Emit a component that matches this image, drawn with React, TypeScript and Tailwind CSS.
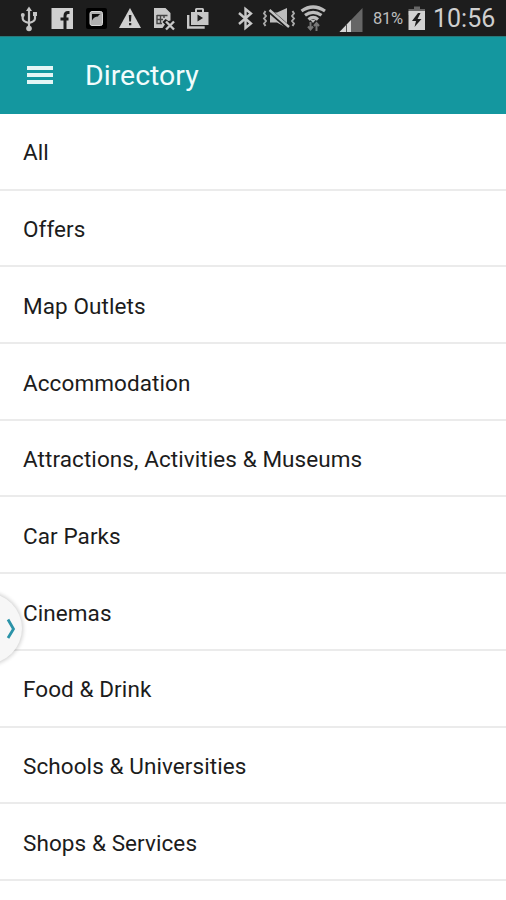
import { useState } from 'react';

const categories = [
  'All',
  'Offers',
  'Map Outlets',
  'Accommodation',
  'Attractions, Activities & Museums',
  'Car Parks',
  'Cinemas',
  'Food & Drink',
  'Schools & Universities',
  'Shops & Services',
];

function NotificationIcons() {
  return (
    <div className="flex h-full items-center">
      {/* USB */}
      <svg className="ml-[20px] h-9 w-[18px]" viewBox="20 0 18 36" fill="none" stroke="#c4c4c4" strokeWidth="2.2">
        <path d="M29 10v18M22.700 15v3.500q0 3 6.300 4.500M35 14v4.500q0 3-6 4.500" />
        <path d="M29 6.500l3 4.500h-6z" fill="#c4c4c4" stroke="none" />
        <circle cx="22.800" cy="15" r="2" fill="#c4c4c4" stroke="none" />
        <path d="M33 12h4v4h-4z" fill="#c4c4c4" stroke="none" />
        <circle cx="29" cy="28.500" r="2.800" fill="#c4c4c4" stroke="none" />
      </svg>
      {/* Facebook */}
      <svg className="ml-[13px] h-9 w-[24px]" viewBox="51 0 24 36">
        <path d="M51.500 8h21.500v21H51.500z" fill="#d0d0d0" />
        <path d="M69.500 12.500h-1.500q-3 0-3 3.500v13M60.500 19h8" fill="none" stroke="#1d1d1d" strokeWidth="3" />
      </svg>
      {/* Flipboard-like tile */}
      <svg className="ml-[11px] h-9 w-[22px]" viewBox="86 0 22 36">
        <rect x="86" y="8" width="21" height="21" rx="2" fill="#000" />
        <rect x="90" y="11.500" width="12.500" height="14" rx="2" fill="#b0b0b0" stroke="#d6d6d6" strokeWidth="1" />
        <path d="M92 20.500V14h8.500q-2 .5-2.500 2.500-4 0-6 4z" fill="#0c0c0c" />
      </svg>
      {/* Warning */}
      <svg className="ml-[10px] h-9 w-[24px]" viewBox="118 0 24 36">
        <path d="M130 8L141 28H119z" fill="#d0d0d0" />
        <path d="M128.800 15h2.600l-.4 6.500h-1.800zM129 23h2.300v2.300H129z" fill="#222" />
      </svg>
      {/* SIM error */}
      <svg className="ml-[11px] h-9 w-[24px]" viewBox="153 0 24 36">
        <path d="M154 8h11.500l5 5v7.500l-2 .5-3-2-3 3 2.500 2.500L162.500 28H154z" fill="#c8c8c8" />
        <path d="M157 15.500h10.500M157 15v8.500h5M157 19.500h6M160.500 15v8.500M164 15v3" fill="none" stroke="#444" strokeWidth="1.400" />
        <path d="M166 21.500l8 8M174 21.500l-8 8" stroke="#c8c8c8" strokeWidth="2.400" />
      </svg>
      {/* Play store bag */}
      <svg className="ml-[10px] h-9 w-[24px]" viewBox="187 0 24 36">
        <path d="M188.200 15v12.500h16.500" fill="none" stroke="#c8c8c8" strokeWidth="2.400" />
        <path d="M191 12h4V9.500q0-1.500 1.500-1.500h6q1.500 0 1.500 1.500V12h4.500v13H191zM197 9.800V12h5V9.800z" fill="#c8c8c8" fillRule="evenodd" />
        <path d="M197.500 14.500l5.500 3.500-5.500 3.500z" fill="#222" />
      </svg>
    </div>
  );
}

function SystemIcons() {
  return (
    <div className="flex h-full items-center">
      {/* Bluetooth */}
      <svg className="h-9 w-[17px]" viewBox="237 0 17 36" fill="none" stroke="#c8c8c8" strokeWidth="2.4">
        <path d="M239 13l12 10.500-5.500 4.500V9l5.500 4.500L239 24" />
      </svg>
      {/* Vibrate / muted */}
      <svg className="ml-[8px] h-9 w-[36px]" viewBox="262 0 36 36">
        <path d="M270 12.500h7l10-4.500v20l-10-5.500h-7z" fill="#bdbdbd" />
        <path d="M268.500 10l20 17.500" stroke="#1d1d1d" strokeWidth="4.500" />
        <path d="M269.500 10l19.500 17" stroke="#c4c4c4" strokeWidth="2.400" />
        <path d="M265.500 11l-1.500 2.500 2 2.500-2 2.500 2 2.500-2 2.500 1.500 2.500M292.500 11l1.500 2.500-2 2.500 2 2.500-2 2.500 2 2.500-1.500 2.500" fill="none" stroke="#aaa" strokeWidth="1.900" />
      </svg>
      {/* Wifi with transfer arrows */}
      <svg className="ml-[2px] h-9 w-[26px]" viewBox="300 0 26 36" fill="none" stroke="#bcbcbc" strokeWidth="3.200">
        <path d="M301.500 11q11.500-8 23.500 0M305 15.300q8-6 16.500 0M308.500 19.500q4.700-4 9.500 0" />
        <path d="M310.500 20h5l-2.500 3z" fill="#bcbcbc" stroke="none" />
        <path d="M310.500 22v7M308 26.500l2.500 3 2.500-3M316.500 31v-8M314 26l2.500-3 2.500 3" stroke="#777" strokeWidth="2" />
      </svg>
      {/* Signal strength */}
      <svg className="ml-[13px] h-9 w-[24px]" viewBox="339 0 24 36">
        <path d="M362.500 8v24h-23z" fill="#666" />
        <path d="M351 20v12h-11.500z" fill="#d5d5d5" />
        <path d="M346.500 24v8" stroke="#555" strokeWidth="1" />
      </svg>
      <span className="ml-[10px] w-[31px] pt-px text-[16.500px] leading-9 tracking-[-0.300px] text-[#bdbdbd]">81%</span>
      {/* Charging battery */}
      <svg className="ml-[4px] h-9 w-[18px]" viewBox="408 0 18 36">
        <path d="M414 6.500h6V9h5v6H408.500V9H414z" fill="#666" />
        <path d="M408.500 11h16.500v19h-16.500z" fill="#d2d2d2" />
        <path d="M418 13l-6 8h4l-1.500 6 7-8h-4l3-6z" fill="#1c1c1c" />
      </svg>
      <span className="ml-[7px] w-[73px] pt-[2px] text-[25px] leading-9 text-[#cfcfcf]">10:56</span>
    </div>
  );
}

export default function App() {
  const [drawerOpen, setDrawerOpen] = useState(false);

  return (
    <div className="relative h-[900px] w-[506px] overflow-hidden bg-white font-['Roboto',sans-serif]">
      {/* Status bar */}
      <div className="flex h-9 justify-between bg-[#1d1d1d]">
        <NotificationIcons />
        <SystemIcons />
      </div>

      {/* App bar */}
      <header className="flex h-[78px] items-center border-t border-[#2a7779] bg-[#14979f]">
        <button
          onClick={() => setDrawerOpen(!drawerOpen)}
          aria-label="Menu"
          className="mb-px ml-[27px] flex w-[26px] flex-col gap-[3px]"
        >
          <span className="h-[4px] w-full bg-[#e4f5f5]" />
          <span className="h-[4px] w-full bg-[#e4f5f5]" />
          <span className="h-[4px] w-full bg-[#e4f5f5]" />
        </button>
        <h1 className="ml-[32px] pt-px text-[28.500px] leading-9 text-[#f2fcfc]">Directory</h1>
      </header>

      {/* Category list */}
      <ul>
        {categories.map((name) => (
          <li
            key={name}
            className="flex h-[76.700px] items-center border-b-2 border-[#ebebeb] pt-[4px] pl-[23px] text-[22.500px] tracking-[0.080px] text-[#1c1c1c]"
          >
            {name}
          </li>
        ))}
      </ul>

      {/* Side drawer handle */}
      <button
        onClick={() => setDrawerOpen(!drawerOpen)}
        aria-label="Open drawer"
        className="absolute top-[593px] -left-[49px] h-[71px] w-[71px] rounded-full bg-[#f7f7f7] shadow-[0_0_4px_1px_rgba(0,0,0,0.2)]"
      >
        <svg className="absolute top-[24px] left-[55px] h-6 w-3" viewBox="0 0 12 24" fill="none" stroke="#2b93a8" strokeWidth="2.800">
          <path d="M2 2.500l5.500 9.500L2 21" />
        </svg>
      </button>
    </div>
  );
}
